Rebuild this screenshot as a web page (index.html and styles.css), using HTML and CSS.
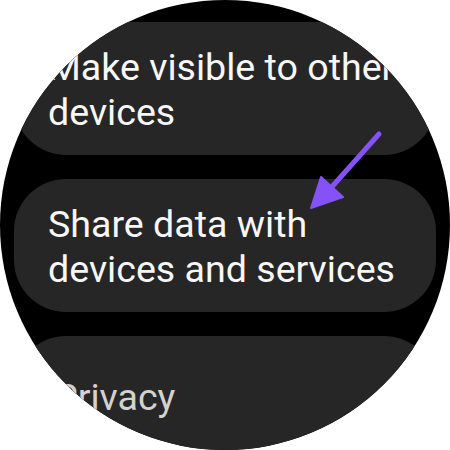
FILE: index.html
```html
<!DOCTYPE html>
<html>
<head>
<meta charset="utf-8">
<link rel="stylesheet" href="styles.css">
</head>
<body>
<div class="watch">
  <div class="list">
    <div class="card"><span class="label">Make visible to other devices</span></div>
    <div class="card"><span class="label">Share data with devices and services</span></div>
    <div class="card card-top"><span class="label dim">Privacy</span></div>
  </div>
  <svg class="arrow" width="450" height="450" viewBox="0 0 450 450">
    <line x1="379" y1="134" x2="330" y2="189" stroke="#8452f7" stroke-width="5" stroke-linecap="round"/>
    <polygon points="311,208 321,177 343,197" fill="#8452f7" stroke="#8452f7" stroke-width="2" stroke-linejoin="round"/>
  </svg>
</div>
</body>
</html>
```
FILE: styles.css
```css
html, body {
  margin: 0;
  padding: 0;
  background: #ffffff;
}
.watch {
  position: relative;
  width: 450px;
  height: 450px;
  border-radius: 50%;
  background: #000000;
  overflow: hidden;
  font-family: Roboto, "Noto Sans", sans-serif;
}
.list {
  display: flex;
  flex-direction: column;
  gap: 24px;
  padding: 22px 14px 0 14px;
}
.card {
  flex: none;
  height: 133px;
  box-sizing: border-box;
  background: #262626;
  border-radius: 52px;
  display: flex;
  align-items: center;
  padding: 3px 10px 0 34px;
}
.card-top {
  align-items: flex-start;
  padding-top: 39px;
}
.label {
  color: #f7f7f7;
  font-size: 37.6px;
  line-height: 45px;
  width: 368px;
  flex: none;
}
.label.dim {
  color: #d2d2d2;
  padding-left: 6px;
}
.arrow {
  position: absolute;
  left: 0;
  top: 0;
}
```
